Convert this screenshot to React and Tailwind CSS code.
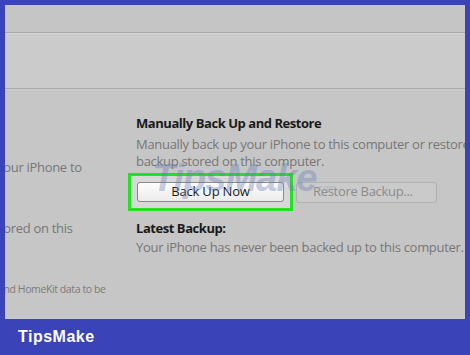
export default function App() {
  const font = { fontFamily: '"Open Sans", "Noto Sans", sans-serif' };
  return (
    <div className="w-[470px] h-[355px] bg-[#3a43b8] flex flex-col overflow-hidden" style={font}>
      <div className="mx-[5px] mt-[5px] h-[314px] bg-[#c6c6c6] flex flex-col overflow-hidden relative">
        <div className="h-[28px] shrink-0 bg-[#c5c5c5] border-b border-[#a8a8a8]" />
        <div className="h-[56px] shrink-0 bg-[#cbcbcb] border-t border-[#d4d4d4] border-b border-b-[#a8a8a8]" />
        <div className="flex flex-1 border-t border-[#d0d0d0]">
          <div className="w-[131px] shrink-0 overflow-hidden text-[#777777] text-[13px] tracking-[-0.3px]">
            <div className="mt-[69px] ml-[-8px] whitespace-nowrap leading-[17px]">your iPhone to</div>
            <div className="mt-[44px] ml-[-12px] whitespace-nowrap leading-[17px]">stored on this</div>
            <div className="mt-[45px] ml-[-7px] whitespace-nowrap text-[10.5px] leading-[14px] tracking-[-0.4px] text-[#7c7c7c]">and HomeKit data to be</div>
          </div>
          <div className="flex-1 min-w-0">
            <div className="mt-[25px] text-[13px] font-bold text-[#1a1a1a] leading-[17px] whitespace-nowrap tracking-[-0.45px]">Manually Back Up and Restore</div>
            <div className="mt-[4px] text-[13px] text-[#777777] leading-[17px] whitespace-nowrap tracking-[-0.3px]">Manually back up your iPhone to this computer or restore a</div>
            <div className="text-[13px] text-[#777777] leading-[17px] whitespace-nowrap tracking-[-0.3px]">backup stored on this computer.</div>
            <div className="mt-[3px] flex items-center">
              <div className="ml-[-8px] w-[165px] h-[38px] shrink-0 border-[3px] border-[#22e022] bg-[#d8d8d8] flex items-center justify-center">
                <div className="w-[147px] h-[20px] rounded-[3px] border border-[#8a8a8a] bg-gradient-to-b from-[#fdfdfd] to-[#ececec] flex items-center justify-center text-[13px] text-[#1a1a1a] tracking-[-0.2px]">Back Up Now</div>
              </div>
              <div className="ml-[3px] w-[141px] h-[21px] shrink-0 rounded-[3px] border border-[#b0b0b0] bg-[#cacaca] flex items-center pl-[16px] text-[13px] text-[#8c8c8c] tracking-[-0.3px]">Restore Backup...</div>
            </div>
            <div className="mt-[9px] text-[13px] font-bold text-[#1a1a1a] leading-[17px] whitespace-nowrap tracking-[-0.45px]">Latest Backup:</div>
            <div className="mt-[2px] text-[13px] text-[#777777] leading-[17px] whitespace-nowrap tracking-[-0.3px]">Your iPhone has never been backed up to this computer.</div>
          </div>
        </div>
        <div className="absolute left-[147px] top-[154px] text-[38px] font-bold italic text-[#6a7fb8]/40 leading-none tracking-[-1px] pointer-events-none whitespace-nowrap" style={{ fontFamily: '"Liberation Sans", Arial, sans-serif' }}>
          TipsMake<span className="text-[9px] font-normal not-italic tracking-normal text-[#9aa4c4]/60">.com</span>
        </div>
      </div>
      <div className="flex-1 flex items-center pl-[18px] pb-[1px]">
        <span className="text-white font-bold text-[16px] tracking-[0.5px]" style={{ fontFamily: '"Liberation Sans", Arial, sans-serif' }}>TipsMake</span>
      </div>
    </div>
  );
}
